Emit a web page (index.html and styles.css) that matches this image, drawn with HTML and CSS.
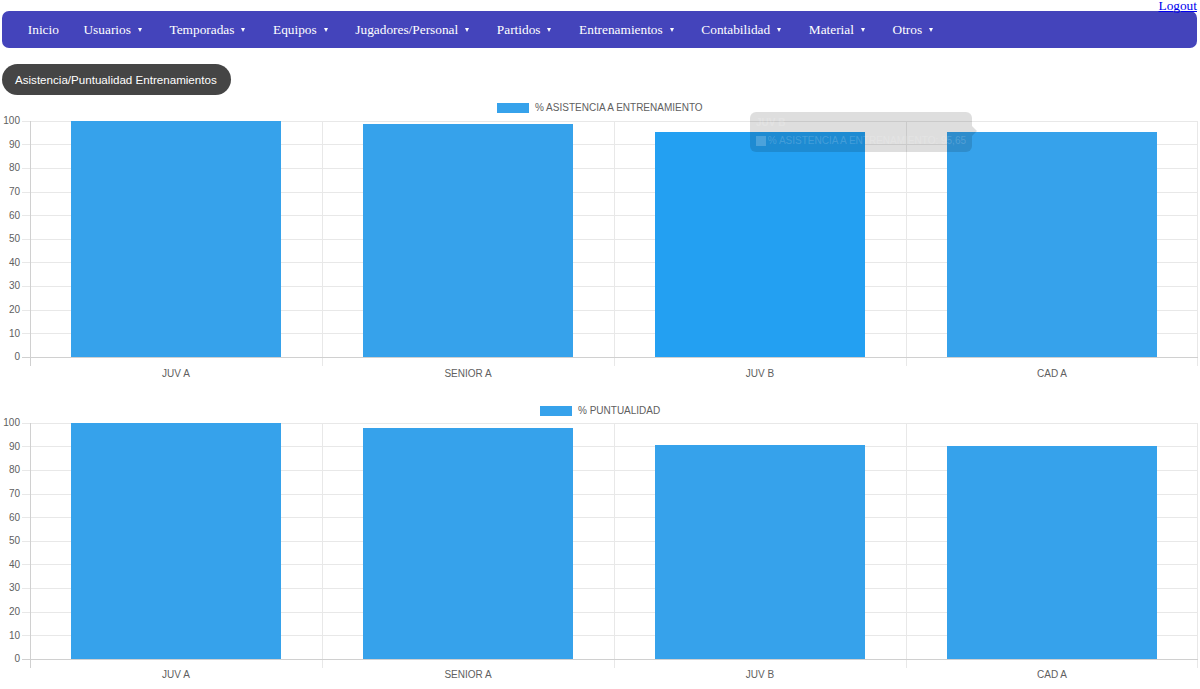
FILE: index.html
```html
<!DOCTYPE html>
<html lang="es">
<head>
<meta charset="utf-8">
<title>Asistencia/Puntualidad Entrenamientos</title>
<link rel="stylesheet" href="styles.css">
</head>
<body>
  <div class="topline"><a href="#" class="logout">Logout</a></div>

  <nav class="menu">
    <a class="menu-item" href="#">Inicio</a>
    <a class="menu-item has-sub" href="#">Usuarios</a>
    <a class="menu-item has-sub" href="#">Temporadas</a>
    <a class="menu-item has-sub" href="#">Equipos</a>
    <a class="menu-item has-sub" href="#">Jugadores/Personal</a>
    <a class="menu-item has-sub" href="#">Partidos</a>
    <a class="menu-item has-sub" href="#">Entrenamientos</a>
    <a class="menu-item has-sub" href="#">Contabilidad</a>
    <a class="menu-item has-sub" href="#">Material</a>
    <a class="menu-item has-sub" href="#">Otros</a>
  </nav>

  <button class="pill" type="button">Asistencia/Puntualidad Entrenamientos</button>

  <!-- Asistencia por equipo -->
  <section class="chart">
    <svg class="chart-svg" width="1200" height="302" viewBox="0 0 1200 302">
      <g class="legend">
        <rect x="497" y="7" width="32" height="10" class="bar"/>
        <text x="535" y="12">% ASISTENCIA A ENTRENAMIENTO</text>
      </g>
      <g class="grid">
        <line x1="22" y1="25.5" x2="1198" y2="25.5"/>
        <line x1="22" y1="48.5" x2="1198" y2="48.5"/>
        <line x1="22" y1="72.5" x2="1198" y2="72.5"/>
        <line x1="22" y1="96.5" x2="1198" y2="96.5"/>
        <line x1="22" y1="119.5" x2="1198" y2="119.5"/>
        <line x1="22" y1="143.5" x2="1198" y2="143.5"/>
        <line x1="22" y1="166.5" x2="1198" y2="166.5"/>
        <line x1="22" y1="190.5" x2="1198" y2="190.5"/>
        <line x1="22" y1="214.5" x2="1198" y2="214.5"/>
        <line x1="22" y1="237.5" x2="1198" y2="237.5"/>
        <line x1="322.5" y1="25" x2="322.5" y2="270"/>
        <line x1="614.5" y1="25" x2="614.5" y2="270"/>
        <line x1="906.5" y1="25" x2="906.5" y2="270"/>
        <line x1="1197.5" y1="25" x2="1197.5" y2="270"/>
      </g>
      <g class="axis">
        <line x1="30.5" y1="25" x2="30.5" y2="270"/>
        <line x1="22" y1="261.5" x2="1198" y2="261.5"/>
      </g>
      <g class="ticks-y">
        <text x="20" y="25.5">100</text>
        <text x="20" y="49">90</text>
        <text x="20" y="72.5">80</text>
        <text x="20" y="96">70</text>
        <text x="20" y="120">60</text>
        <text x="20" y="143.5">50</text>
        <text x="20" y="167">40</text>
        <text x="20" y="190.5">30</text>
        <text x="20" y="214">20</text>
        <text x="20" y="238">10</text>
        <text x="20" y="261.5">0</text>
      </g>
      <g>
        <rect class="bar" x="71" y="25" width="210" height="236"/>
        <rect class="bar" x="363" y="28" width="210" height="233"/>
        <rect class="bar bar-hover" x="655" y="36" width="210" height="225"/>
        <rect class="bar" x="947" y="36" width="210" height="225"/>
      </g>
      <g class="ticks-x">
        <text x="176" y="278">JUV A</text>
        <text x="468" y="278">SENIOR A</text>
        <text x="760" y="278">JUV B</text>
        <text x="1052" y="278">CAD A</text>
      </g>
    </svg>
    <div class="tooltip">
      <div class="tooltip-title">JUV B</div>
      <div class="tooltip-body"><span class="tooltip-swatch"></span>% ASISTENCIA A ENTRENAMIENTO: 95,65</div>
    </div>
  </section>

  <!-- Puntualidad por equipo -->
  <section class="chart">
    <svg class="chart-svg" width="1200" height="302" viewBox="0 0 1200 302">
      <g class="legend">
        <rect x="540" y="8" width="32" height="10" class="bar"/>
        <text x="578" y="13">% PUNTUALIDAD</text>
      </g>
      <g class="grid">
        <line x1="22" y1="25.5" x2="1198" y2="25.5"/>
        <line x1="22" y1="48.5" x2="1198" y2="48.5"/>
        <line x1="22" y1="72.5" x2="1198" y2="72.5"/>
        <line x1="22" y1="96.5" x2="1198" y2="96.5"/>
        <line x1="22" y1="119.5" x2="1198" y2="119.5"/>
        <line x1="22" y1="143.5" x2="1198" y2="143.5"/>
        <line x1="22" y1="166.5" x2="1198" y2="166.5"/>
        <line x1="22" y1="190.5" x2="1198" y2="190.5"/>
        <line x1="22" y1="214.5" x2="1198" y2="214.5"/>
        <line x1="22" y1="237.5" x2="1198" y2="237.5"/>
        <line x1="322.5" y1="25" x2="322.5" y2="270"/>
        <line x1="614.5" y1="25" x2="614.5" y2="270"/>
        <line x1="906.5" y1="25" x2="906.5" y2="270"/>
        <line x1="1197.5" y1="25" x2="1197.5" y2="270"/>
      </g>
      <g class="axis">
        <line x1="30.5" y1="25" x2="30.5" y2="270"/>
        <line x1="22" y1="261.5" x2="1198" y2="261.5"/>
      </g>
      <g class="ticks-y">
        <text x="20" y="25.5">100</text>
        <text x="20" y="49">90</text>
        <text x="20" y="72.5">80</text>
        <text x="20" y="96">70</text>
        <text x="20" y="120">60</text>
        <text x="20" y="143.5">50</text>
        <text x="20" y="167">40</text>
        <text x="20" y="190.5">30</text>
        <text x="20" y="214">20</text>
        <text x="20" y="238">10</text>
        <text x="20" y="261.5">0</text>
      </g>
      <g>
        <rect class="bar" x="71" y="25" width="210" height="236"/>
        <rect class="bar" x="363" y="30" width="210" height="231"/>
        <rect class="bar" x="655" y="47" width="210" height="214"/>
        <rect class="bar" x="947" y="48" width="210" height="213"/>
      </g>
      <g class="ticks-x">
        <text x="176" y="277">JUV A</text>
        <text x="468" y="277">SENIOR A</text>
        <text x="760" y="277">JUV B</text>
        <text x="1052" y="277">CAD A</text>
      </g>
    </svg>
  </section>
</body>
</html>
```

FILE: styles.css
```css
html, body {
  margin: 0;
  padding: 0;
  background: #ffffff;
}

body {
  font-family: "Liberation Serif", "Times New Roman", serif;
  overflow: hidden;
}

/* ---- top line with the logout link ---- */
.topline {
  height: 11px;
  line-height: 12px;
  text-align: right;
  padding-right: 3px;
  font-size: 13.33px;
}

.logout {
  color: #0000ee;
  text-decoration: underline;
}

/* ---- main menu bar ---- */
.menu {
  display: flex;
  align-items: center;
  height: 37px;
  margin: 0 3px 0 2px;
  padding-left: 13.5px;
  background: #4444bb;
  border-radius: 7px;
}

.menu-item {
  display: flex;
  align-items: center;
  padding: 0 12.3px;
  color: #ffffff;
  font-size: 13.33px;
  text-decoration: none;
  white-space: nowrap;
}

.has-sub::after {
  content: "";
  display: inline-block;
  width: 0;
  height: 0;
  margin-left: 7px;
  margin-right: 3px;
  border-left: 2.5px solid transparent;
  border-right: 2.5px solid transparent;
  border-top: 4px solid #ffffff;
}

/* ---- section button ---- */
.pill {
  display: block;
  margin: 16px 0 0 2px;
  height: 31px;
  padding: 0 14px 0 13px;
  border: none;
  border-radius: 16px;
  background: #454545;
  color: #ffffff;
  font-family: "Liberation Sans", Arial, sans-serif;
  font-size: 11.6px;
}

/* ---- bar charts ---- */
.chart {
  position: relative;
  height: 302px;
}

.chart:first-of-type {
  margin-top: 1px;
}

.chart-svg {
  display: block;
  font-family: "Liberation Sans", Arial, sans-serif;
  font-size: 10px;
}

.chart-svg text {
  fill: #606060;
}

.legend text {
  dominant-baseline: middle;
}

.grid line {
  stroke: #e8e8e8;
  stroke-width: 1;
}

.axis line {
  stroke: #d0d0d0;
  stroke-width: 1;
}

.ticks-y text {
  text-anchor: end;
  dominant-baseline: middle;
}

.ticks-x text {
  text-anchor: middle;
  dominant-baseline: middle;
}

.bar {
  fill: #36a2eb;
}

.bar-hover {
  fill: #23a0f2;
}

/* fading hover tooltip */
.tooltip {
  position: absolute;
  left: 750px;
  top: 16px;
  width: 222px;
  height: 40px;
  box-sizing: border-box;
  padding: 5px 6px;
  border-radius: 6px;
  background: rgba(0, 0, 0, 0.13);
  font-family: "Liberation Sans", Arial, sans-serif;
  font-size: 10px;
  color: rgba(255, 255, 255, 0.18);
  white-space: nowrap;
}

.tooltip::after {
  content: "";
  position: absolute;
  right: -5px;
  top: 14px;
  border-top: 5px solid transparent;
  border-bottom: 5px solid transparent;
  border-left: 5px solid rgba(0, 0, 0, 0.13);
}

.tooltip-title {
  font-weight: bold;
  line-height: 12px;
  margin-bottom: 6px;
}

.tooltip-body {
  display: flex;
  align-items: center;
  line-height: 12px;
}

.tooltip-swatch {
  display: inline-block;
  width: 10px;
  height: 10px;
  margin-right: 2px;
  background: rgba(255, 255, 255, 0.2);
}
```
